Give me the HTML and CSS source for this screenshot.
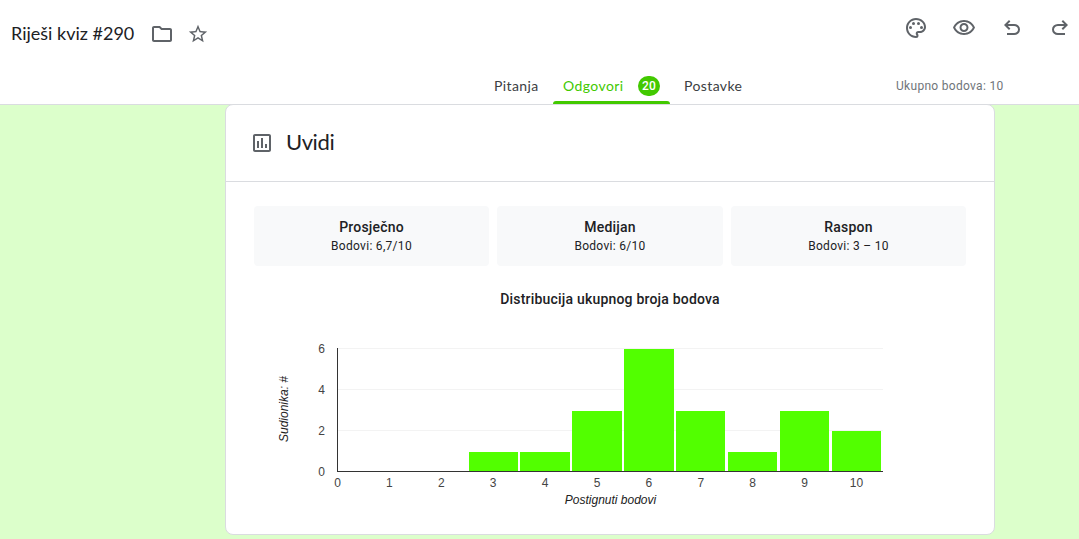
FILE: index.html
```html
<!DOCTYPE html>
<html lang="hr">
<head>
    <meta charset="UTF-8">
    <meta name="viewport" content="width=device-width, initial-scale=1.0">
    <title>Riješi kviz #290</title>
    <link rel="stylesheet" href="styles.css">
</head>
<body>

    <header class="header">
        <div class="top-bar">
            <div class="doc-name">
                <h1>Riješi kviz #290</h1>
                <svg class="icon folder" viewBox="0 0 24 24"><path d="M9.17 6l2 2H20v10H4V6h5.17M10 4H4c-1.1 0-1.99.9-1.99 2L2 18c0 1.1.9 2 2 2h16c1.1 0 2-.9 2-2V8c0-1.1-.9-2-2-2h-8l-2-2z"/></svg>
                <svg class="icon star" viewBox="0 0 24 24"><path d="M22 9.24l-7.19-.62L12 2 9.19 8.63 2 9.24l5.46 4.73L5.82 21 12 17.27 18.18 21l-1.63-7.03L22 9.24zM12 15.4l-3.76 2.27 1-4.28-3.32-2.88 4.38-.38L12 6.1l1.71 4.04 4.38.38-3.32 2.88 1 4.28L12 15.4z"/></svg>
            </div>
            <div class="actions">
                <svg class="icon" viewBox="0 0 24 24"><path d="M12 22C6.49 22 2 17.51 2 12S6.49 2 12 2s10 4.04 10 9c0 3.31-2.69 6-6 6h-1.77c-.28 0-.5.22-.5.5 0 .12.05.23.13.33.41.47.64 1.06.64 1.67A2.5 2.5 0 0 1 12 22zm0-18c-4.41 0-8 3.59-8 8s3.59 8 8 8c.28 0 .5-.22.5-.5a.54.54 0 0 0-.14-.35c-.41-.46-.63-1.05-.63-1.65a2.5 2.5 0 0 1 2.5-2.5H16c2.21 0 4-1.79 4-4 0-3.86-3.59-7-8-7z"/><circle cx="6.5" cy="11.5" r="1.5"/><circle cx="9.5" cy="7.5" r="1.5"/><circle cx="14.5" cy="7.5" r="1.5"/><circle cx="17.5" cy="11.5" r="1.5"/></svg>
                <svg class="icon" viewBox="0 0 24 24"><path d="M12 6c3.79 0 7.17 2.13 8.82 5.5C19.17 14.87 15.79 17 12 17s-7.17-2.13-8.82-5.5C4.83 8.13 8.21 6 12 6m0-2C7 4 2.73 7.11 1 11.5 2.73 15.89 7 19 12 19s9.27-3.11 11-7.5C21.27 7.11 17 4 12 4zm0 5c1.38 0 2.5 1.12 2.5 2.5S13.38 14 12 14s-2.5-1.12-2.5-2.5S10.62 9 12 9m0-2c-2.48 0-4.5 2.02-4.5 4.5S9.52 16 12 16s4.5-2.02 4.5-4.5S14.48 7 12 7z"/></svg>
                <svg class="icon" viewBox="0 0 24 24"><path d="M7 19v-2h7.1q1.575 0 2.737-1T18 13.5 16.837 11 14.1 10H7.8l2.6 2.6L9 14 4 9l5-5 1.4 1.4L7.8 8h6.3q2.425 0 4.163 1.575T20 13.5t-1.737 3.925T14.1 19z"/></svg>
                <svg class="icon" viewBox="0 0 24 24"><path d="M9.9 19q-2.425 0-4.163-1.575T4 13.5t1.737-3.925T9.9 8h6.3l-2.6-2.6L15 4l5 5-5 5-1.4-1.4 2.6-2.6H9.9q-1.575 0-2.737 1T6 13.5 7.163 16 9.9 17H17v2z"/></svg>
            </div>
        </div>
        <nav class="tabs">
            <a class="tab">Pitanja</a>
            <a class="tab active">Odgovori <span class="badge">20</span></a>
            <a class="tab">Postavke</a>
            <span class="total">Ukupno bodova: 10</span>
        </nav>
    </header>

    <main class="card">
        <div class="card-title">
            <svg class="icon" viewBox="0 0 24 24"><path d="M19 3H5c-1.1 0-2 .9-2 2v14c0 1.1.9 2 2 2h14c1.1 0 2-.9 2-2V5c0-1.1-.9-2-2-2zm0 16H5V5h14v14zM7 10h2v7H7zm4-3h2v10h-2zm4 6h2v4h-2z"/></svg>
            <h2>Uvidi</h2>
        </div>

        <div class="stats">
            <div class="stat"><strong>Prosječno</strong><span>Bodovi: 6,7/10</span></div>
            <div class="stat"><strong>Medijan</strong><span>Bodovi: 6/10</span></div>
            <div class="stat"><strong>Raspon</strong><span>Bodovi: 3 – 10</span></div>
        </div>

        <h3>Distribucija ukupnog broja bodova</h3>

        <svg class="chart" width="712" height="200" viewBox="0 0 712 200">
            <g class="grid">
                <rect x="84" y="32" width="545" height="1"/>
                <rect x="84" y="73" width="545" height="1"/>
                <rect x="84" y="114" width="545" height="1"/>
            </g>
            <g class="bars">
                <rect x="215" y="136" width="49" height="19"/>
                <rect x="266" y="136" width="50" height="19"/>
                <rect x="318" y="95" width="50" height="60"/>
                <rect x="370" y="33" width="50" height="122"/>
                <rect x="422" y="95" width="49" height="60"/>
                <rect x="474" y="136" width="49" height="19"/>
                <rect x="526" y="95" width="49" height="60"/>
                <rect x="578" y="115" width="49" height="40"/>
            </g>
            <g class="axis">
                <rect x="83" y="32" width="1" height="124"/>
                <rect x="83" y="155" width="546" height="1"/>
            </g>
            <g class="y-labels">
                <text x="71" y="37">6</text>
                <text x="71" y="78">4</text>
                <text x="71" y="119">2</text>
                <text x="71" y="160">0</text>
            </g>
            <g class="x-labels">
                <text x="83.5" y="171">0</text>
                <text x="135.4" y="171">1</text>
                <text x="187.3" y="171">2</text>
                <text x="239.2" y="171">3</text>
                <text x="291.1" y="171">4</text>
                <text x="343" y="171">5</text>
                <text x="394.9" y="171">6</text>
                <text x="446.8" y="171">7</text>
                <text x="498.7" y="171">8</text>
                <text x="550.6" y="171">9</text>
                <text x="602.5" y="171">10</text>
            </g>
            <text class="axis-title" x="356.5" y="188">Postignuti bodovi</text>
            <text class="axis-title" transform="translate(34 93) rotate(-90)">Sudionika: #</text>
        </svg>
    </main>

</body>
</html>
```
FILE: styles.css
```css
body {
    font-family: Roboto, Arial, sans-serif;
    background-color: #dcffcb;
    color: #202124;
    margin: 0;
    height: 539px;
    overflow: hidden;
}

h1, h2, h3 {
    margin: 0;
    font-weight: 400;
}

.icon {
    width: 24px;
    height: 24px;
    fill: #5f6368;
    flex: none;
}

.header {
    height: 104px;
    background-color: #fff;
    border-bottom: 1px solid #dadce0;
}

.top-bar {
    display: flex;
    justify-content: space-between;
    height: 68px;
}

.doc-name {
    display: flex;
    align-items: center;
    height: 68px;
    padding-left: 11px;
}

h1 {
    font-family: Lato, sans-serif;
    font-size: 18px;
    width: 139px;
    padding-bottom: 2px;
    white-space: nowrap;
}

.star {
    width: 22px;
    height: 22px;
    margin-left: 13px;
}

.actions {
    display: flex;
    gap: 24px;
    padding-top: 16px;
    margin-right: 7px;
}

.tabs {
    display: flex;
    height: 36px;
    padding-left: 484px;
    font-family: Lato, sans-serif;
    font-size: 14px;
    line-height: 36px;
    letter-spacing: 0.4px;
}

.tab {
    box-sizing: border-box;
    display: flex;
    width: 69px;
    padding-left: 10px;
    color: #3c4043;
}

.tab.active {
    width: 117px;
    padding-right: 10px;
    color: #42c900;
    position: relative;
    align-items: center;
    justify-content: space-between;
}

.tab.active::after {
    content: "";
    position: absolute;
    left: 0;
    right: 0;
    bottom: 0;
    height: 3px;
    border-radius: 3px 3px 0 0;
    background-color: #42c900;
}

.tab:nth-child(3) {
    padding-left: 14px;
}

.badge {
    width: 22px;
    height: 20px;
    border-radius: 10px;
    background-color: #42c900;
    color: #fff;
    font-family: Roboto, Arial, sans-serif;
    font-size: 12px;
    font-weight: 500;
    line-height: 20px;
    letter-spacing: 0.2px;
    text-align: center;
}

.total {
    margin-left: 157px;
    font-family: Roboto, Arial, sans-serif;
    font-size: 12px;
    letter-spacing: 0.3px;
    color: #70757a;
    white-space: nowrap;
}

.card {
    box-sizing: border-box;
    width: 770px;
    height: 431px;
    margin: -1px 0 0 225px;
    background-color: #fff;
    border: 1px solid #dadce0;
    border-radius: 8px;
}

.card-title {
    display: flex;
    align-items: center;
    gap: 12px;
    height: 76px;
    padding-left: 24px;
    border-bottom: 1px solid #dadce0;
}

h2 {
    font-family: Lato, sans-serif;
    font-size: 22px;
    letter-spacing: -0.4px;
    padding-bottom: 3px;
}

.stats {
    display: grid;
    grid-template-columns: 235px 226px 235px;
    gap: 8px;
    margin: 24px 28px 0;
}

.stat {
    display: flex;
    flex-direction: column;
    align-items: center;
    box-sizing: border-box;
    height: 60px;
    padding-top: 11px;
    border-radius: 4px;
    background-color: #f8f9fa;
}

.stat strong {
    font-size: 14px;
    font-weight: 500;
    line-height: 20px;
    letter-spacing: 0.2px;
}

.stat span {
    font-size: 12px;
    line-height: 18px;
    letter-spacing: 0.3px;
}

h3 {
    margin-top: 23px;
    font-size: 14px;
    font-weight: 500;
    line-height: 20px;
    letter-spacing: 0.2px;
    text-align: center;
}

.chart {
    display: block;
    margin: 7px 28px 0;
    font-family: "Liberation Sans", Arial, sans-serif;
    font-size: 12px;
}

.grid {
    fill: #f3f3f3;
}

.bars {
    fill: #52ff00;
}

.axis {
    fill: #333;
}

.y-labels {
    fill: #444;
    text-anchor: end;
}

.x-labels {
    fill: #444;
    text-anchor: middle;
}

.axis-title {
    fill: #222;
    font-style: italic;
    text-anchor: middle;
}
```
